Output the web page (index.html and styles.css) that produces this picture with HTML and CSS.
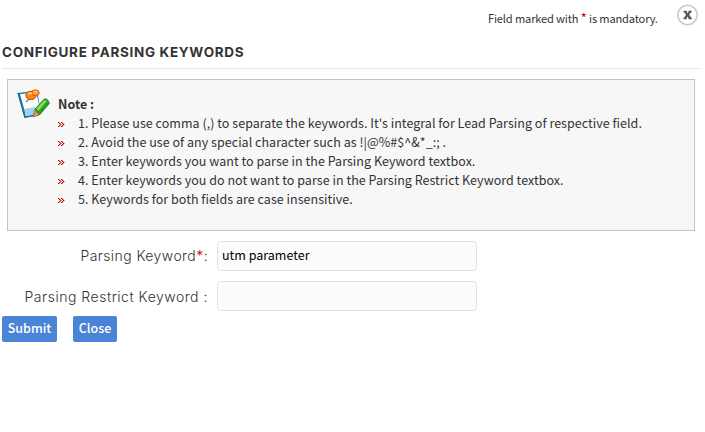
FILE: index.html
```html
<!DOCTYPE html>
<html lang="en">

<head>
    <meta charset="UTF-8">
    <meta name="viewport" content="width=device-width, initial-scale=1.0">
    <title>Configure Parsing Keywords</title>
    <link rel="stylesheet" href="styles.css">
</head>

<body>

    <svg class="defs" width="0" height="0">
        <symbol id="arrow" viewBox="0 0 7 5">
            <path d="M0 0h1v1h-1zM1 1h1v1h-1zM2 2h1v1h-1zM1 3h1v1h-1zM0 4h1v1h-1zM3 0h1v1h-1zM4 1h1v1h-1zM5 2h1v1h-1zM4 3h1v1h-1zM3 4h1v1h-1z" fill="#c00000" />
            <path d="M1 0h1v1h-1zM2 1h1v1h-1zM3 2h1v1h-1zM2 3h1v1h-1zM1 4h1v1h-1zM4 0h1v1h-1zM5 1h1v1h-1zM6 2h1v1h-1zM5 3h1v1h-1zM4 4h1v1h-1z" fill="#e6a19c" />
        </symbol>
    </svg>

    <div class="topbar">
        <p class="mandatory">Field marked with <span class="star">*</span> is mandatory.</p>
        <button class="close-icon" type="button" aria-label="Close">
            <svg width="22" height="22" viewBox="0 0 22 22">
                <circle cx="10.500" cy="11" r="9.7" fill="#fff" stroke="#c9c9c9" stroke-width="1.5" />
                <path d="M6.500 6.800h3.400v1.200l.8 1.400.8-1.400V6.800h3.200v1.400h-.7l-1.800 2.600 2 2.900h.7v1.500h-3.400v-1.300l-.9-1.400-.9 1.400v1.300H6.400v-1.500h.7l2-2.900-1.800-2.600h-.8z" fill="#555" />
            </svg>
        </button>
    </div>

    <h1>CONFIGURE PARSING KEYWORDS</h1>

    <div class="note">
        <svg class="note-icon" width="34" height="32" viewBox="0 0 34 32">
            <path d="M.5 5L20 2.500L24 23.500L20 27.500L7.500 30z" fill="#2580b0" />
            <path d="M3 6.300L19 4L23 20L18 25L8.500 25.500z" fill="#f9fcff" />
            <path d="M7.500 21L18 19L17.500 27L8.500 28.500z" fill="#9dd3ee" />
            <path d="M1 5l6.800 24.300l10-2" stroke="#17628f" stroke-width="1" fill="none" />
            <path d="M18 21L27.500 10.800Q31.500 11 32.300 15.500L22.500 27z" fill="#2f9e22" stroke="#1d741a" stroke-width=".8" />
            <path d="M19.500 20.500L27.700 11.700L29.800 13.300L21.300 23z" fill="#86dc5c" />
            <path d="M17.500 21.500l5 5.500-6.300 2z" fill="#d99a48" stroke="#7c5522" stroke-width=".6" />
            <path d="M12 11l-3 3" stroke="#777" stroke-width="1.200" />
            <ellipse cx="14" cy="7.500" rx="5.200" ry="4.200" fill="#f78a16" stroke="#c95305" />
            <ellipse cx="18.500" cy="4.800" rx="3.700" ry="3" fill="#ff9a2b" stroke="#d65b05" />
            <path d="M11 6q2-2 4 0M17 4q2-1 3 0" stroke="#ffd08a" stroke-width="1.300" fill="none" />
        </svg>
        <div class="note-text">
            <strong>Note :</strong>
            <ul>
                <li><svg class="arrow"><use href="#arrow" /></svg><span>1. Please use comma (,) to separate the keywords. It's integral for Lead Parsing of respective field.</span></li>
                <li><svg class="arrow"><use href="#arrow" /></svg><span>2. Avoid the use of any special character such as !|@%#$^&amp;*_:; .</span></li>
                <li><svg class="arrow"><use href="#arrow" /></svg><span>3. Enter keywords you want to parse in the Parsing Keyword textbox.</span></li>
                <li><svg class="arrow"><use href="#arrow" /></svg><span>4. Enter keywords you do not want to parse in the Parsing Restrict Keyword textbox.</span></li>
                <li><svg class="arrow"><use href="#arrow" /></svg><span>5. Keywords for both fields are case insensitive.</span></li>
            </ul>
        </div>
    </div>

    <form class="keywords">
        <div class="row">
            <label for="keyword">Parsing Keyword<span class="star">*</span>:</label>
            <input id="keyword" type="text" value="utm parameter">
        </div>
        <div class="row">
            <label class="restrict" for="restrict">Parsing Restrict Keyword :</label>
            <input id="restrict" type="text">
        </div>
        <div class="buttons">
            <button class="btn submit" type="button">Submit</button>
            <button class="btn close" type="button">Close</button>
        </div>
    </form>

</body>

</html>
```

FILE: styles.css
```css
* {
    margin: 0;
    padding: 0;
    box-sizing: border-box;
}

body {
    font-family: "Noto Sans CJK SC", "Open Sans", sans-serif;
    font-size: 12.5px;
    color: #333;
    background-color: #fff;
}

.defs {
    display: block;
}

.star {
    color: #c00;
}

.topbar {
    display: flex;
    justify-content: flex-end;
    height: 38px;
    padding: 4px 6px 0 0;
}

.mandatory {
    width: 170px;
    margin: 4px 19px 0 0;
    font-size: 11.1px;
    line-height: 20px;
    letter-spacing: -0.15px;
    white-space: nowrap;
}

.mandatory .star {
    font-size: 13px;
    line-height: 1;
}

.close-icon {
    width: 22px;
    height: 22px;
    background: none;
    border: none;
    cursor: pointer;
}

.close-icon svg {
    display: block;
}

h1 {
    height: 31px;
    margin: 0 5px 0 2px;
    border-bottom: 1px solid #e8e8e8;
    font-family: Inter, sans-serif;
    font-size: 13.5px;
    font-weight: 700;
    line-height: 28px;
    letter-spacing: 0.67px;
    color: #333;
    white-space: nowrap;
}

.note {
    display: flex;
    width: 688px;
    height: 152px;
    margin: 10px 0 0 7px;
    padding: 8px 0 0 9px;
    background-color: #f7f7f7;
    border: 1px solid #c4c4c4;
}

.note-icon {
    flex: none;
}

.note-text {
    padding: 6px 0 0 7px;
    line-height: 19px;
    letter-spacing: 0.032px;
}

.note-text strong {
    display: block;
    height: 19px;
}

.note ul {
    list-style: none;
}

.note li {
    display: flex;
    height: 19px;
    white-space: nowrap;
}

.arrow {
    width: 7px;
    height: 5px;
    margin: 9px 13px 0 0;
}

.keywords {
    padding-top: 10px;
}

.row {
    display: flex;
    height: 30px;
    margin-bottom: 10px;
}

.row label {
    width: 208px;
    margin-right: 9px;
    font-family: Inter, sans-serif;
    font-size: 14px;
    font-weight: 300;
    line-height: 30px;
    letter-spacing: 0.42px;
    text-align: right;
    white-space: nowrap;
}

.row .restrict {
    line-height: 32px;
    letter-spacing: 0.52px;
}

.row input {
    width: 260px;
    height: 30px;
    padding: 0 4px 3px;
    font-family: inherit;
    font-size: 12.5px;
    color: #000;
    background-color: #fcfcfc;
    border: 1px solid #e2e2e2;
    border-radius: 4px;
    outline: none;
}

.buttons {
    display: flex;
    gap: 16px;
    margin: -5px 0 0 2px;
}

.btn {
    width: 55px;
    height: 26px;
    padding-bottom: 2px;
    font-family: inherit;
    font-size: 12.5px;
    font-weight: 500;
    line-height: 24px;
    color: #fff;
    background-color: #4a84d6;
    border: none;
    border-radius: 2px;
    cursor: pointer;
}

.btn.close {
    width: 44px;
}
```
